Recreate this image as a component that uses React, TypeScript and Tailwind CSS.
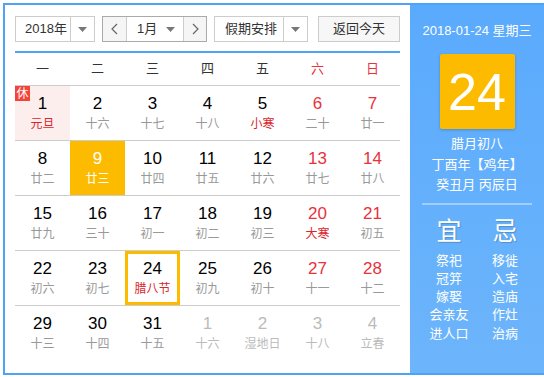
import React from 'react';

type Day = {
  d: number;
  l: string;
  red?: boolean;
  festival?: boolean;
  other?: boolean;
  rest?: boolean;
  picked?: boolean;
  today?: boolean;
};

const rows: Day[][] = [
  [
    { d: 1, l: '元旦', festival: true, rest: true },
    { d: 2, l: '十六' },
    { d: 3, l: '十七' },
    { d: 4, l: '十八' },
    { d: 5, l: '小寒', festival: true },
    { d: 6, l: '二十', red: true },
    { d: 7, l: '廿一', red: true },
  ],
  [
    { d: 8, l: '廿二' },
    { d: 9, l: '廿三', picked: true },
    { d: 10, l: '廿四' },
    { d: 11, l: '廿五' },
    { d: 12, l: '廿六' },
    { d: 13, l: '廿七', red: true },
    { d: 14, l: '廿八', red: true },
  ],
  [
    { d: 15, l: '廿九' },
    { d: 16, l: '三十' },
    { d: 17, l: '初一' },
    { d: 18, l: '初二' },
    { d: 19, l: '初三' },
    { d: 20, l: '大寒', red: true, festival: true },
    { d: 21, l: '初五', red: true },
  ],
  [
    { d: 22, l: '初六' },
    { d: 23, l: '初七' },
    { d: 24, l: '腊八节', festival: true, today: true },
    { d: 25, l: '初九' },
    { d: 26, l: '初十' },
    { d: 27, l: '十一', red: true },
    { d: 28, l: '十二', red: true },
  ],
  [
    { d: 29, l: '十三' },
    { d: 30, l: '十四' },
    { d: 31, l: '十五' },
    { d: 1, l: '十六', other: true },
    { d: 2, l: '湿地日', other: true },
    { d: 3, l: '十八', other: true },
    { d: 4, l: '立春', other: true },
  ],
];

const weekdays = ['一', '二', '三', '四', '五', '六', '日'];
const yi = ['祭祀', '冠笄', '嫁娶', '会亲友', '进人口'];
const ji = ['移徙', '入宅', '造庙', '作灶', '治病'];

const font = { fontFamily: '"Liberation Sans", "Noto Sans CJK SC", sans-serif' };

function Caret() {
  return (
    <svg width="9" height="5" viewBox="0 0 9 5">
      <path d="M0 0h9L4.5 5z" fill="#777" />
    </svg>
  );
}

function Cell({ day }: { day: Day }) {
  let box = 'bg-white';
  if (day.rest) box = 'bg-[#fdeeee]';
  if (day.picked) box = 'bg-[#fdbb00]';
  if (day.today) box = 'bg-white border-[3px] border-[#fdbb00]';

  let num = 'text-black';
  if (day.red) num = 'text-[#e8323c]';
  if (day.other) num = 'text-[#bbbbbb]';
  if (day.picked) num = 'text-white';

  let lunar = 'text-[#999999]';
  if (day.festival) lunar = 'text-[#d9262b]';
  if (day.other) lunar = 'text-[#bbbbbb]';
  if (day.picked) lunar = 'text-white';

  return (
    <div className={`relative flex h-[54px] flex-col items-center justify-center ${box}`}>
      {day.rest && (
        <span className="absolute left-0 top-0 flex h-[15px] w-[15px] items-center justify-center bg-[#f4433a] text-[12px] leading-none text-white">
          休
        </span>
      )}
      <span className={`text-[17px] leading-[20px] ${num}`}>{day.d}</span>
      <span className={`mt-[1px] text-[12px] leading-[18px] ${lunar}`}>{day.l}</span>
    </div>
  );
}

export default function App() {
  return (
    <div className="h-[377px] w-[544px] overflow-hidden bg-white pl-[3px] pt-[3px]" style={font}>
      <div className="flex h-[372px] w-[541px] border-2 border-r-0 border-[#4ea3f7]">
        <div className="w-[405px] px-[10px] pt-[11px]">
          <div className="flex h-[26px] text-[13px] text-[#333]">
            <div className="flex w-[80px] border border-[#cccccc]">
              <span className="flex flex-1 items-center pl-[9px]">2018年</span>
              <span className="flex w-[24px] items-center justify-center border-l border-[#cccccc]">
                <Caret />
              </span>
            </div>
            <div className="ml-[7px] flex w-[105px] border border-[#aaaaaa]">
              <span className="flex w-[23px] items-center justify-center bg-[#f5f5f5] text-[#666]">
                <svg width="7" height="12" viewBox="0 0 7 12">
                  <path d="M6 1L1 6l5 5" fill="none" stroke="#666" strokeWidth="1.2" />
                </svg>
              </span>
              <span className="flex flex-1 items-center justify-between border-x border-[#cccccc] pl-[10px] pr-[8px]">
                1月
                <Caret />
              </span>
              <span className="flex w-[22px] items-center justify-center bg-[#f5f5f5]">
                <svg width="7" height="12" viewBox="0 0 7 12">
                  <path d="M1 1l5 5-5 5" fill="none" stroke="#666" strokeWidth="1.2" />
                </svg>
              </span>
            </div>
            <div className="ml-[7px] flex w-[94px] border border-[#cccccc]">
              <span className="flex flex-1 items-center pl-[10px]">假期安排</span>
              <span className="flex w-[24px] items-center justify-center border-l border-[#cccccc]">
                <Caret />
              </span>
            </div>
            <div className="ml-[10px] flex w-[82px] items-center justify-center border border-[#cccccc] bg-[#f7f7f7]">
              返回今天
            </div>
          </div>

          <div className="mt-[9px] h-[2px] bg-[#4ea3f7]" />

          <div className="grid h-[33px] grid-cols-7 border-b border-[#cccccc] text-[13px]">
            {weekdays.map((w, i) => (
              <div
                key={w}
                className={`flex items-center justify-center ${i >= 5 ? 'text-[#e8323c]' : 'text-[#333]'}`}
              >
                {w}
              </div>
            ))}
          </div>

          {rows.map((row, r) => (
            <div
              key={r}
              className={`grid grid-cols-7 ${r < rows.length - 1 ? 'border-b border-[#cccccc]' : ''}`}
            >
              {row.map((day, i) => (
                <Cell key={i} day={day} />
              ))}
            </div>
          ))}
        </div>

        <div className="flex w-[134px] flex-col items-center bg-gradient-to-b from-[#5aaafd] to-[#6db5fb] text-white">
          <div className="mt-[17px] text-[13px] leading-[18px]">2018-01-24 星期三</div>
          <div className="mt-[14px] flex h-[75px] w-[75px] items-center justify-center rounded-[2px] bg-[#fdbb00] text-[52px] leading-none shadow-[0_1px_3px_rgba(0,0,0,0.2)]">
            24
          </div>
          <div className="mt-[5px] flex flex-col items-center text-[13px] leading-[20.5px]">
            <span>腊月初八</span>
            <span>丁酉年【鸡年】</span>
            <span>癸丑月 丙辰日</span>
          </div>
          <div className="mt-[7px] h-[2px] w-[110px] bg-white/40" />
          <div className="mt-[12px] flex w-[110px] justify-between">
            {[
              { t: '宜', list: yi },
              { t: '忌', list: ji },
            ].map((c) => (
              <div key={c.t} className="flex w-[54px] flex-col items-center">
                <span className="text-[25px] leading-[28px] [text-shadow:1px_1px_1px_rgba(0,0,0,0.2)]">{c.t}</span>
                <div className="mt-[7px] flex flex-col items-center text-[13px] leading-[18.3px]">
                  {c.list.map((x) => (
                    <span key={x}>{x}</span>
                  ))}
                </div>
              </div>
            ))}
          </div>
        </div>
      </div>
    </div>
  );
}
